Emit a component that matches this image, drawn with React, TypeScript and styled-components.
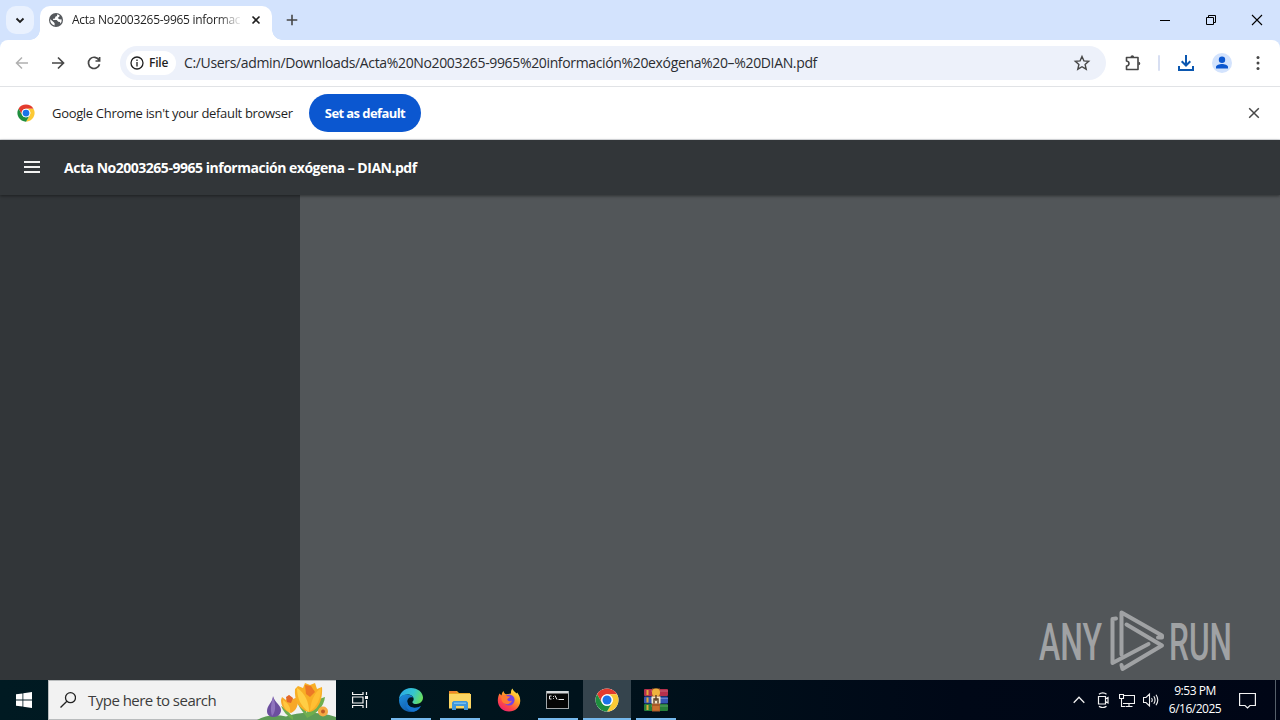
import type { ReactNode } from "react";
import styled, { createGlobalStyle } from "styled-components";

const GlobalStyle = createGlobalStyle`
  * {
    box-sizing: border-box;
  }

  body {
    margin: 0;
    overflow: hidden;
    font-family: "Open Sans", "Noto Sans", sans-serif;
  }

  svg {
    display: block;
    flex: none;
  }
`;

const Screen = styled.div`
  display: grid;
  grid-template-rows: 40px 47px 53px 540px 40px;
  width: 1280px;
  height: 720px;
`;

const Label = styled.span<{ $size: number; $spacing?: number; $weight?: number; $color?: string }>`
  font-size: ${(p) => p.$size}px;
  font-weight: ${(p) => p.$weight ?? 400};
  letter-spacing: ${(p) => p.$spacing ?? 0}px;
  color: ${(p) => p.$color ?? "#1f1f1f"};
  line-height: 20px;
  white-space: nowrap;
`;

const Slot = styled.div<{ $width: number }>`
  width: ${(p) => p.$width}px;
  flex: none;
  display: flex;
  align-items: center;
  justify-content: center;
`;

/* ---------- tab strip ---------- */

const TabStrip = styled.div`
  display: flex;
  align-items: flex-start;
  background: #d3e3fd;
`;

const TabSearch = styled.div`
  width: 28px;
  height: 28px;
  margin: 6px 6px 0;
  display: flex;
  align-items: center;
  justify-content: center;
  border-radius: 10px;
  background: #e9f1fe;
`;

const Tab = styled.div`
  position: relative;
  width: 232px;
  height: 34px;
  margin-top: 6px;
  padding: 0 8px 6px;
  display: flex;
  align-items: center;
  border-radius: 10px 10px 0 0;
  background: #ffffff;

  &::before,
  &::after {
    content: "";
    position: absolute;
    bottom: 0;
    width: 10px;
    height: 10px;
  }

  &::before {
    left: -10px;
    background: radial-gradient(circle at 0 0, transparent 9.5px, #ffffff 10px);
  }

  &::after {
    right: -10px;
    background: radial-gradient(circle at 100% 0, transparent 9.5px, #ffffff 10px);
  }
`;

const TabTitle = styled.div`
  width: 168px;
  margin: 0 8px;
  overflow: hidden;
  display: flex;
  mask-image: linear-gradient(to right, #000 146px, transparent 170px);
`;

const NewTab = styled(Slot)`
  height: 40px;
`;

const WindowControls = styled.div`
  display: flex;
  height: 40px;
  margin-left: auto;
`;

/* ---------- toolbar ---------- */

const ToolbarBack = styled.div`
  background: linear-gradient(#d3e3fd 50%, #ffffff 50%);
`;

const Toolbar = styled.div`
  height: 47px;
  padding: 0 4px;
  display: flex;
  background: #ffffff;
  border-radius: 8px 8px 0 0;
  border-bottom: 1px solid #e1e3e6;
`;

const Omnibox = styled.div`
  width: 986px;
  height: 34px;
  margin: 6px 8px 0;
  padding: 0 6px;
  display: flex;
  align-items: center;
  border-radius: 17px;
  background: #edf1fa;
`;

const FileChip = styled.div`
  width: 50px;
  height: 24px;
  margin-right: 8px;
  padding-left: 4px;
  display: flex;
  align-items: center;
  gap: 5px;
  border-radius: 12px;
  background: #ffffff;
`;

const StarSlot = styled.div`
  margin: 0 8px 0 auto;
`;

const Divider = styled.div`
  width: 2px;
  height: 16px;
  border-radius: 1px;
  background: #d8dff2;
`;

const Avatar = styled.div`
  width: 20px;
  height: 20px;
  border-radius: 50%;
  background: #d3e3fd;
`;

/* ---------- infobar ---------- */

const InfoBar = styled.div`
  padding: 0 17px;
  display: flex;
  align-items: center;
  background: #ffffff;
  border-bottom: 1px solid #dfe1e4;
`;

const InfoText = styled.div`
  width: 274px;
  padding-left: 17px;
  display: flex;
`;

const DefaultButton = styled.button`
  width: 112px;
  height: 38px;
  padding: 0;
  border: 0;
  border-radius: 19px;
  background: #0b57d0;
  font-family: inherit;
`;

const InfoClose = styled.div`
  margin-left: auto;
  padding-right: 3px;
`;

/* ---------- pdf viewer ---------- */

const Viewer = styled.div`
  display: grid;
  grid-template-rows: 55px 485px;
`;

const ViewerHeader = styled.header`
  position: relative;
  padding-left: 24px;
  display: flex;
  align-items: center;
  gap: 24px;
  background: #323639;
  box-shadow: 0 1px 3px rgba(0, 0, 0, 0.45);
`;

const ViewerBody = styled.div`
  display: grid;
  grid-template-columns: 300px 1fr;
`;

const Sidebar = styled.aside`
  background: #323639;
`;

const PageArea = styled.main`
  padding: 411px 42px 0 0;
  display: flex;
  justify-content: flex-end;
  align-items: flex-start;
  background: #525659;
`;

/* ---------- taskbar ---------- */

const Taskbar = styled.footer`
  display: flex;
  background: linear-gradient(to right, #001a22, #00131c 45%, #000817 75%, #000616);
`;

const SearchBox = styled.div`
  position: relative;
  width: 288px;
  padding-left: 11px;
  display: flex;
  align-items: center;
  gap: 12px;
  background: #f2f2f2;
  border: 1px solid #b9bcbd;
  border-right: 0;
`;

const Flowers = styled.div`
  position: absolute;
  right: 0;
  bottom: -1px;
`;

const Apps = styled.div`
  display: flex;
  gap: 1px;
  margin-left: 3px;
`;

const AppButton = styled.div<{ $open?: boolean; $active?: boolean }>`
  width: 48px;
  height: 40px;
  display: flex;
  align-items: center;
  justify-content: center;
  background: ${(p) => (p.$active ? "#35444d" : "transparent")};
  position: relative;

  &::after {
    content: "";
    position: absolute;
    bottom: 0;
    left: ${(p) => (p.$active ? 0 : 4)}px;
    right: ${(p) => (p.$active ? 0 : 4)}px;
    height: 2px;
    background: ${(p) => (p.$open ? "#76b9ed" : "transparent")};
  }
`;

const Tray = styled.div`
  display: flex;
  margin-left: auto;
`;

const Clock = styled.div`
  width: 64px;
  padding-top: 2px;
  display: flex;
  flex-direction: column;
  align-items: center;

  span {
    line-height: 18px;
  }
`;

const ShowDesktop = styled.div`
  width: 5px;
  margin-left: 8px;
  border-left: 1px solid #56606a;
`;

/* ---------- icons ---------- */

type StrokeProps = {
  size?: number;
  color?: string;
  width?: number;
  children: ReactNode;
};

function Stroke({ size = 16, color = "#474747", width = 1.5, children }: StrokeProps) {
  return (
    <svg width={size} height={size} viewBox={`0 0 ${size} ${size}`} fill="none" stroke={color} strokeWidth={width}>
      {children}
    </svg>
  );
}

function ChromeLogo({ size }: { size: number }) {
  return (
    <svg width={size} height={size} viewBox="0 0 48 48">
      <circle cx="24" cy="24" r="23" fill="#fff" />
      <path d="M4.1 12.5A23 23 0 0 1 43.9 12.5H24A11.5 11.5 0 0 0 14 29.75Z" fill="#e33b2e" />
      <path d="M43.9 12.5A23 23 0 0 1 24 47L34 29.75A11.5 11.5 0 0 0 24 12.5Z" fill="#fcc934" />
      <path d="M24 47A23 23 0 0 1 4.1 12.5L14 29.75A11.5 11.5 0 0 0 34 29.75Z" fill="#1e8e3e" />
      <circle cx="24" cy="24" r="11.5" fill="#fff" />
      <circle cx="24" cy="24" r="9" fill="#1a73e8" />
    </svg>
  );
}

function GlobeIcon() {
  return (
    <svg width="16" height="16" viewBox="0 0 16 16">
      <circle cx="8" cy="8" r="7" fill="#55585c" />
      <path
        d="M2.3 7.2 5.8 10.3 6.6 11.2V13.6C4 13 2.2 10.8 2.2 8ZM9.2 2.3 9 4.1 7.3 4.8 7 6.5 5.2 6.8 5 8H8.7L10.3 9.8 12 10.1 12.3 11.8A5.8 5.8 0 0 0 13.7 7.4L11.3 7.2 9.8 6 11.4 4.6 11.6 3.4A6 6 0 0 0 9.2 2.3Z"
        fill="#fff"
      />
    </svg>
  );
}

function EdgeIcon() {
  return (
    <svg width="26" height="26" viewBox="0 0 26 26">
      <defs>
        <linearGradient id="edgeTop" x1="0" y1="0.3" x2="1" y2="0.6">
          <stop offset="0" stopColor="#2aa8e8" />
          <stop offset="0.55" stopColor="#35c5cf" />
          <stop offset="1" stopColor="#6be05a" />
        </linearGradient>
        <linearGradient id="edgeLow" x1="0" y1="0" x2="0.8" y2="1">
          <stop offset="0" stopColor="#1d8fe0" />
          <stop offset="1" stopColor="#10529f" />
        </linearGradient>
      </defs>
      <path
        d="M1 13C1 6 6.3 1 13 1c6.8 0 12 4.4 12 9.6 0 4-3.2 6.4-6.6 6.4-2.7 0-4-1-4-1.8 0-.7 1.3-1.2 1.3-3.1C15.7 9.6 13 7.5 9.5 7.5 5 7.5 1.5 10.3 1 13Z"
        fill="url(#edgeTop)"
      />
      <path
        d="M1 13c.5-3.7 4-5.6 8-5.6 3.5 0 5.6 1.6 6.3 3.3-3.4-1.5-6.1 1-6.1 3.8 0 4.3 4.3 7.2 8.7 6.5 2-.3 3.6-1.2 4.9-2-.2 1.2-3.8 6-9.8 6C6 25 1 19.8 1 13Z"
        fill="url(#edgeLow)"
      />
      <path d="M9.2 14.5c-3.2 4 .2 9.6 6.3 10.3 3.6-.6 6.1-2.8 7.3-5.8-3.5 2.3-12.8 3.2-13.6-4.5Z" fill="#1474cf" />
    </svg>
  );
}

function ExplorerIcon() {
  return (
    <svg width="24" height="20" viewBox="0 0 24 20">
      <path d="M1 2.5 2 1H9L11 3H22V18H1Z" fill="#e9a825" />
      <path d="M1 1H8L9 3H1Z" fill="#f0862e" />
      <path d="M1 4H23V18.5H1Z" fill="#fcd663" />
      <path d="M4 12.5 5.5 11H18.5L20 12.5V20H16V16H8V20H4Z" fill="#3f97da" />
      <path d="M6 12.5H18V14H6Z" fill="#74bdf0" />
    </svg>
  );
}

function FirefoxIcon() {
  return (
    <svg width="24" height="24" viewBox="0 0 24 24">
      <defs>
        <linearGradient id="fox" x1="0.85" y1="0" x2="0.2" y2="1">
          <stop offset="0" stopColor="#fff04d" />
          <stop offset="0.4" stopColor="#ffa126" />
          <stop offset="0.7" stopColor="#ff4a45" />
          <stop offset="1" stopColor="#ec1d74" />
        </linearGradient>
      </defs>
      <path
        d="M2.5 5.5 4.5 7.5C5 4.5 6 3.5 6.5 3c.3 1.5 1 2.5 2.5 3.3L14 5.5C13.7 3 14.5 1.5 15.5.5c.5 2 2.5 3.5 4 5l.7-1C22 7 23.5 9.5 23.2 13.5 22.8 19.5 18 23.5 12 23.5S.8 19 .8 12.5c0-2.5.7-5 1.7-7Z"
        fill="url(#fox)"
      />
      <circle cx="12" cy="12" r="5.6" fill="#7542e4" />
      <path d="M4.5 8c2-1.5 4-1.5 6 .2l2.5.3c-.3 1.7-2.5 1.5-2.8 3 .5 2 3.5 2 4.8 1-1 3.5-5.5 4.8-8.5 2.5C4.5 13.5 4 10.5 4.5 8Z" fill="#ff7b31" />
    </svg>
  );
}

function TerminalIcon() {
  return (
    <svg width="24" height="20" viewBox="0 0 24 20">
      <rect x="0.5" y="1.5" width="22" height="17" fill="#050505" stroke="#a3a8ab" />
      <rect x="1" y="1" width="21" height="2.5" fill="#d5d8da" />
      <path d="M5.5 6H3.5V9H5.5M7.5 6V6.9M7.5 8.2V9M9 5.5 11 9.5M12.5 9.5H18" stroke="#e8e8e8" fill="none" />
    </svg>
  );
}

function RarIcon() {
  return (
    <svg width="24" height="24" viewBox="0 0 24 24">
      <rect x="0" y="1" width="24" height="7" rx="1" fill="#b5304c" />
      <rect x="0" y="8.5" width="24" height="7" rx="1" fill="#3556b4" />
      <rect x="0" y="16" width="24" height="7" rx="1" fill="#27803a" />
      <path d="M7 3H24M7 10.5H24M7 18H24" stroke="#fff" strokeOpacity="0.25" />
      <path d="M3.5 2V7M3.5 9.5V14.5M3.5 17V22" stroke="#e0a93a" strokeWidth="2" />
      <rect x="8" y="0.5" width="8" height="23" fill="#a85a28" />
      <circle cx="12" cy="4.5" r="4" fill="#efb23e" />
      <rect x="7.5" y="8.5" width="9" height="7" fill="#f4e6cb" />
      <path d="M10 15.5V11H14V15.5M12 7V13" stroke="#5a3d22" strokeWidth="1.4" fill="none" />
      <rect x="8.5" y="18" width="7" height="4.5" fill="#c9712f" />
    </svg>
  );
}

function FlowerArt() {
  return (
    <svg width="82" height="40" viewBox="0 0 82 40">
      <path d="M3 40C11 35 22 34 32 36.5C44 32 64 31 82 37V40Z" fill="#5f9c57" />
      <path d="M39 37C33 30 30 27 27 26 29 31 33 36 39 40ZM52 36C46 29 44 24 42 20 49 22 53 29 53 36ZM52 36C54 26 61 20 71 17 70 27 62 34 53 38Z" fill="#6fae4e" />
      <g transform="translate(3 0)">
        <path d="M16 16C16 22 10 25 10 31 10 35 13 37 17 37 21 37 24 34 24 30 24 25 18 23 16 16Z" fill="#6c4f9f" />
        <path d="M16 17C14 24 13 30 15 36 19 32 19 24 16 17Z" fill="#8f74bd" />
        <path d="M24 20 25 17 29 20 32 15 36 19 41 17C42 25 39 31 34 33 27 31 24 26 24 20Z" fill="#f7a829" />
        <path d="M26 20C31 23 34 27 33 33 28 30 26 26 26 20Z" fill="#ffc740" />
        <path d="M29 17 32 15 36 18 34 23 30 22Z" fill="#e2662a" />
      </g>
      <path d="M41 9 44 6 49 8 51 3 56 5 61 3 63 9 68 7C69 20 64 31 55 32 45 30 40 20 41 9Z" fill="#f8ae25" />
      <path d="M43 8C51 13 55 22 55 32 47 27 43 18 43 8Z" fill="#ffce45" />
      <path d="M67 8C61 12 57 20 56 31 63 27 67 18 67 8Z" fill="#ffbf33" />
      <path d="M51 5 57 6 61 12 56 17 52 14Z" fill="#ec7826" />
      <circle cx="69" cy="31.5" r="5" fill="#f6a943" />
      <circle cx="69" cy="31.5" r="2" fill="#c05b25" />
    </svg>
  );
}

function Watermark() {
  return (
    <svg width="200" height="74" viewBox="0 -1 200 74" fill="#a0a2a4">
      <g fontFamily="Roboto, sans-serif" fontSize="51.5" fontWeight="500">
        <text x="1" y="52.5" textLength="63" lengthAdjust="spacingAndGlyphs">ANY</text>
        <text x="131" y="52.5" textLength="63" lengthAdjust="spacingAndGlyphs">RUN</text>
      </g>
      <g fill="none" stroke="#a0a2a4" strokeWidth="4" strokeLinejoin="round" strokeLinecap="round">
        <path d="M83.5 47.500V5.500L124 28.500V30.500L120 30.500" />
        <path d="M88.500 17.500 124 38.500 84.500 62 83.500 58" />
        <path d="M78 11.500 74.500 12V56L110.500 37" />
      </g>
    </svg>
  );
}

function BrowserTabs() {
  return (
    <TabStrip>
      <TabSearch>
        <Stroke size={10} color="#1f1f1f" width={1.8}>
          <path d="M1.5 3.5 5 7 8.5 3.5" />
        </Stroke>
      </TabSearch>
      <Tab>
        <GlobeIcon />
        <TabTitle>
          <Label $size={12} $spacing={-0.28}>
            Acta No2003265-9965 información exógena
          </Label>
        </TabTitle>
        <Stroke size={16} color="#1f1f1f" width={1.6}>
          <path d="M4.5 4.5 11.5 11.5M11.5 4.5 4.5 11.5" />
        </Stroke>
      </Tab>
      <NewTab $width={40}>
        <Stroke size={12} width={1.6}>
          <path d="M6 .7V11.3M.7 6H11.3" />
        </Stroke>
      </NewTab>
      <WindowControls>
        <Slot $width={46}>
          <Stroke size={12} color="#000" width={1}>
            <path d="M1 6.5H11" />
          </Stroke>
        </Slot>
        <Slot $width={46}>
          <Stroke size={12} color="#000" width={1}>
            <path d="M1.5 3.5H8.5V10.5H1.5ZM3.5 3.5V1.5H10.5V8.5H8.5" />
          </Stroke>
        </Slot>
        <Slot $width={46}>
          <Stroke size={12} color="#000" width={1.1}>
            <path d="M1 1 11 11M11 1 1 11" />
          </Stroke>
        </Slot>
      </WindowControls>
    </TabStrip>
  );
}

function BrowserToolbar() {
  return (
    <ToolbarBack>
      <Toolbar>
        <Slot $width={36}>
          <Stroke color="#b0b0b0">
            <path d="M14 8H3M8 2.5 2.5 8 8 13.5" />
          </Stroke>
        </Slot>
        <Slot $width={36}>
          <Stroke width={1.7}>
            <path d="M2 8H13M8 2.5 13.5 8 8 13.5" />
          </Stroke>
        </Slot>
        <Slot $width={36}>
          <Stroke width={1.7}>
            <path d="M13 5.2A5.6 5.6 0 1 0 13.5 9.2M13.6 2V6H9.5" />
          </Stroke>
        </Slot>
        <Omnibox>
          <FileChip>
            <Stroke size={14} color="#1f1f1f" width={1.3}>
              <circle cx="7" cy="7" r="6" />
              <path d="M7 6V10.5M7 3.5V5" />
            </Stroke>
            <Label $size={12} $weight={600} $spacing={-0.2}>
              File
            </Label>
          </FileChip>
          <Label $size={14} $spacing={-0.35} $color="#2b2d31">
            C:/Users/admin/Downloads/Acta%20No2003265-9965%20información%20exógena%20–%20DIAN.pdf
          </Label>
          <StarSlot>
            <Stroke size={20} width={1.4}>
              <path d="M10 3.5 11.9 7.9 16.7 8.3 13.1 11.5 14.2 16.2 10 13.7 5.8 16.2 6.9 11.5 3.3 8.3 8.1 7.9Z" />
            </Stroke>
          </StarSlot>
        </Omnibox>
        <Slot $width={36}>
          <Stroke size={18} width={1.6}>
            <path d="M3.5 3.5H15V15.5H3.5V12C6.8 11.5 6.8 7.5 3.5 7Z" strokeLinejoin="round" />
            <path d="M7.5 3A1.8 1.8 0 0 1 11.1 3ZM15.5 7.7A1.8 1.8 0 0 1 15.5 11.3Z" fill="#474747" stroke="none" />
          </Stroke>
        </Slot>
        <Slot $width={18}>
          <Divider />
        </Slot>
        <Slot $width={36}>
          <Stroke size={18} color="#0b57b0" width={2}>
            <path d="M9 1V11.5M4.7 7.2 9 11.5 13.3 7.2M2 12V16H16V12" />
          </Stroke>
        </Slot>
        <Slot $width={36}>
          <Avatar>
            <svg width="20" height="20" viewBox="0 0 20 20" fill="#0b57d0">
              <circle cx="10" cy="6.8" r="3.2" />
              <path d="M4 15.5V14C4 12 7.5 11 10 11S16 12 16 14V15.5Z" />
            </svg>
          </Avatar>
        </Slot>
        <Slot $width={36}>
          <svg width="4" height="16" viewBox="0 0 4 16" fill="#474747">
            <circle cx="2" cy="2.5" r="1.5" />
            <circle cx="2" cy="8" r="1.5" />
            <circle cx="2" cy="13.5" r="1.5" />
          </svg>
        </Slot>
      </Toolbar>
    </ToolbarBack>
  );
}

function DefaultBrowserBar() {
  return (
    <InfoBar>
      <ChromeLogo size={18} />
      <InfoText>
        <Label $size={13} $spacing={-0.32}>
          Google Chrome isn't your default browser
        </Label>
      </InfoText>
      <DefaultButton>
        <Label $size={13} $weight={700} $spacing={-0.58} $color="#fff">
          Set as default
        </Label>
      </DefaultButton>
      <InfoClose>
        <Stroke size={12} width={1.5}>
          <path d="M1.2 1.2 10.8 10.8M10.8 1.2 1.2 10.8" />
        </Stroke>
      </InfoClose>
    </InfoBar>
  );
}

function PdfViewer() {
  return (
    <Viewer>
      <ViewerHeader>
        <Stroke size={16} color="#f1f1f1" width={2}>
          <path d="M0 2H16M0 7H16M0 12H16" />
        </Stroke>
        <Label $size={14} $weight={700} $spacing={-0.48} $color="#fff">
          Acta No2003265-9965 información exógena – DIAN.pdf
        </Label>
      </ViewerHeader>
      <ViewerBody>
        <Sidebar />
        <PageArea>
          <Watermark />
        </PageArea>
      </ViewerBody>
    </Viewer>
  );
}

function WindowsTaskbar() {
  return (
    <Taskbar>
      <Slot $width={48}>
        <svg width="16" height="16" viewBox="0 0 16 16" fill="#fff">
          <path d="M0 2.3 6.5 1.4V7.5H0ZM7.3 1.3 16 0V7.5H7.3ZM0 8.4H6.5V14.6L0 13.7ZM7.3 8.4H16V16L7.3 14.7Z" />
        </svg>
      </Slot>
      <SearchBox>
        <Stroke size={16} color="#222" width={1.3}>
          <circle cx="10.5" cy="5.7" r="5" />
          <path d="M6.9 9.3 .5 15.5" />
        </Stroke>
        <Label $size={15} $spacing={-0.52} $color="#3c3c3c">
          Type here to search
        </Label>
        <Flowers>
          <FlowerArt />
        </Flowers>
      </SearchBox>
      <Slot $width={48}>
        <Stroke size={16} color="#f2f2f2" width={1.2}>
          <path d="M.6 0V2.5H11V0M.6 5H11V11H.6ZM.6 16V13.5H11V16M14.5 0V3M14.5 8V16" />
          <path d="M13 4H16V7H13Z" fill="#f2f2f2" stroke="none" />
        </Stroke>
      </Slot>
      <Apps>
        <AppButton $open>
          <EdgeIcon />
        </AppButton>
        <AppButton $open>
          <ExplorerIcon />
        </AppButton>
        <AppButton>
          <FirefoxIcon />
        </AppButton>
        <AppButton $open>
          <TerminalIcon />
        </AppButton>
        <AppButton $open $active>
          <ChromeLogo size={24} />
        </AppButton>
        <AppButton $open>
          <RarIcon />
        </AppButton>
      </Apps>
      <Tray>
        <Slot $width={24}>
          <Stroke size={12} color="#f2f2f2" width={1.3}>
            <path d="M.7 8.7 6 3.3 11.3 8.7" />
          </Stroke>
        </Slot>
        <Slot $width={24}>
          <Stroke size={16} color="#f2f2f2" width={1.2}>
            <path d="M3.5 4.5H10.5V12H3.5ZM10.5 7 13 5.5V11L10.5 9.5M4 2.2C6 .4 9.5 .4 11.5 2.2M4 14.3C6 16 9.5 16 11.5 14.3" />
          </Stroke>
        </Slot>
        <Slot $width={24}>
          <Stroke size={16} color="#f2f2f2" width={1.1}>
            <path d="M5 3.5H15.5V11.5H4M.5 2.5H4.5V6.5H.5ZM2.5 6.5V14.5H6M10 11.5V14.5M6.5 14.5H13.5" />
          </Stroke>
        </Slot>
        <Slot $width={24}>
          <Stroke size={16} color="#f2f2f2" width={1.1}>
            <path d="M.5 5.5H3L6.5 2V14L3 10.5H.5ZM8.5 6Q10 8 8.5 10M10.8 4.3Q13.3 8 10.8 11.7M13 2.8Q16.6 8 13 13.2" />
          </Stroke>
        </Slot>
        <Clock>
          <Label $size={12} $spacing={-0.45} $color="#fff">
            9:53 PM
          </Label>
          <Label $size={12} $spacing={-0.5} $color="#fff">
            6/16/2025
          </Label>
        </Clock>
        <Slot $width={40}>
          <Stroke size={17} color="#f2f2f2" width={1.2}>
            <path d="M.6 1.5H16.4V13.5H11L8.5 16 6 13.5H.6Z" />
          </Stroke>
        </Slot>
        <ShowDesktop />
      </Tray>
    </Taskbar>
  );
}

function App() {
  return (
    <>
      <GlobalStyle />
      <Screen>
        <BrowserTabs />
        <BrowserToolbar />
        <DefaultBrowserBar />
        <PdfViewer />
        <WindowsTaskbar />
      </Screen>
    </>
  );
}

export default App;
